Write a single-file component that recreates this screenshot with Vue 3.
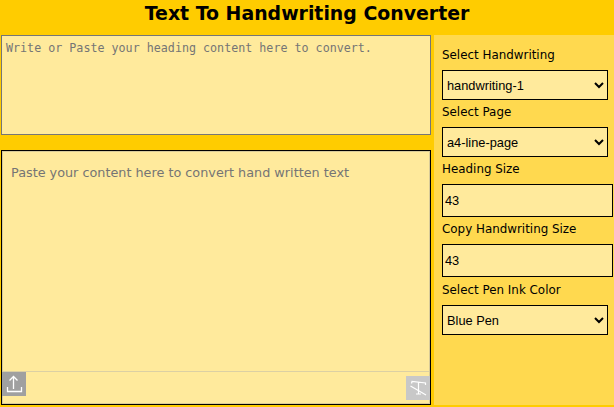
<template>
  <div class="page">
    <h1 class="title">Text To Handwriting Converter</h1>
    <div class="main">
      <div class="editor">
        <textarea
          class="heading-input"
          placeholder="Write or Paste your heading content here to convert."
        ></textarea>
        <div class="content-box">
          <div class="content-inner">
            <div class="content-text">
              <span class="placeholder">Paste your content here to convert hand written text</span>
            </div>
            <div class="toolbar">
              <button class="tool tool-upload" aria-label="Upload">
                <svg width="24" height="24" viewBox="0 0 24 24" fill="none" stroke="#fff" stroke-width="1.3">
                  <path d="M11.5 17V4.5M7.5 8.5l4-4 4 4" />
                  <path d="M5.5 15v4.5h14V15" />
                </svg>
              </button>
              <button class="tool tool-clear" aria-label="Clear format">
                <svg width="24" height="24" viewBox="0 0 24 24" fill="none" stroke="#fff" stroke-width="1.2">
                  <path d="M5.5 7.5l.5-2 13.5 1.5v2M12.5 6.5v11M10 18h5" />
                  <path d="M4.5 10l15.5 9" />
                </svg>
              </button>
            </div>
          </div>
        </div>
      </div>
      <aside class="sidebar">
        <div class="field" v-for="field in fields" :key="field.label">
          <label class="field-label">{{ field.label }}</label>
          <select v-if="field.options" class="control select">
            <option v-for="option in field.options" :key="option">{{ option }}</option>
          </select>
          <input v-else class="control number" type="text" :value="field.value" />
        </div>
      </aside>
    </div>
  </div>
</template>

<script setup>
const fields = [
  { label: 'Select Handwriting', options: ['handwriting-1', 'handwriting-2'] },
  { label: 'Select Page', options: ['a4-line-page', 'a4-blank-page'] },
  { label: 'Heading Size', value: '43' },
  { label: 'Copy Handwriting Size', value: '43' },
  { label: 'Select Pen Ink Color', options: ['Blue Pen', 'Black Pen'] }
]
</script>

<style>
html,
body {
  margin: 0;
  background: #ffcc00;
}
</style>

<style scoped>
.page {
  width: 614px;
  height: 407px;
  background: #ffcc00;
  overflow: hidden;
}

.title {
  margin: 0;
  height: 35px;
  line-height: 27px;
  text-align: center;
  font-family: "DejaVu Sans", sans-serif;
  font-size: 18.9px;
  font-weight: bold;
  color: #000;
}

.main {
  display: flex;
  height: 370px;
}

.editor {
  width: 431px;
  padding-left: 1px;
  box-sizing: border-box;
  display: flex;
  flex-direction: column;
}

.heading-input {
  display: block;
  box-sizing: border-box;
  width: 430px;
  height: 100px;
  margin: 0 0 15px;
  padding: 5px 4px;
  border: 1px solid #767676;
  background: #ffea9c;
  resize: none;
  outline: none;
  font-family: "DejaVu Sans Mono", monospace;
  font-size: 11.7px;
}

.heading-input::placeholder {
  color: #757575;
}

.content-box {
  box-sizing: border-box;
  width: 430px;
  height: 255px;
  border: 1px solid #000;
  background: #ffea9c;
}

.content-inner {
  box-sizing: border-box;
  height: 100%;
  border: 1px solid #d8cb9a;
  display: flex;
  flex-direction: column;
}

.content-text {
  flex: 1;
  padding: 13px 8px;
  border-bottom: 1px solid #dcd0a4;
  font-family: "DejaVu Sans", sans-serif;
  font-size: 12.8px;
  line-height: 16px;
}

.placeholder {
  color: #757575;
}

.toolbar {
  height: 31px;
  margin: 0 -1px;
  display: flex;
  justify-content: space-between;
  align-items: flex-start;
}

.tool {
  width: 24px;
  height: 24px;
  padding: 0;
  border: 0;
  display: flex;
}

.tool-upload {
  background: #a0a0a0;
}

.tool-clear {
  background: #c8c8c8;
  margin-top: 4px;
}

.sidebar {
  flex: 1;
  background: #ffd94f;
  padding: 8px 0 0 8px;
  margin-left: 3px;
}

.field:last-child {
  margin-top: 1px;
}

.field-label {
  display: block;
  height: 27px;
  line-height: 24px;
  font-family: "DejaVu Sans", sans-serif;
  font-size: 11.9px;
  color: #000;
}

.control {
  display: block;
  box-sizing: border-box;
  border: 1px solid #000;
  background: #ffea9c;
  border-radius: 0;
  font-family: "Liberation Sans", sans-serif;
  font-size: 12.8px;
  color: #000;
  outline: none;
}

.select {
  width: 166px;
  height: 30px;
}

.number {
  width: 171px;
  height: 33px;
  padding: 1px 2px;
}
</style>
